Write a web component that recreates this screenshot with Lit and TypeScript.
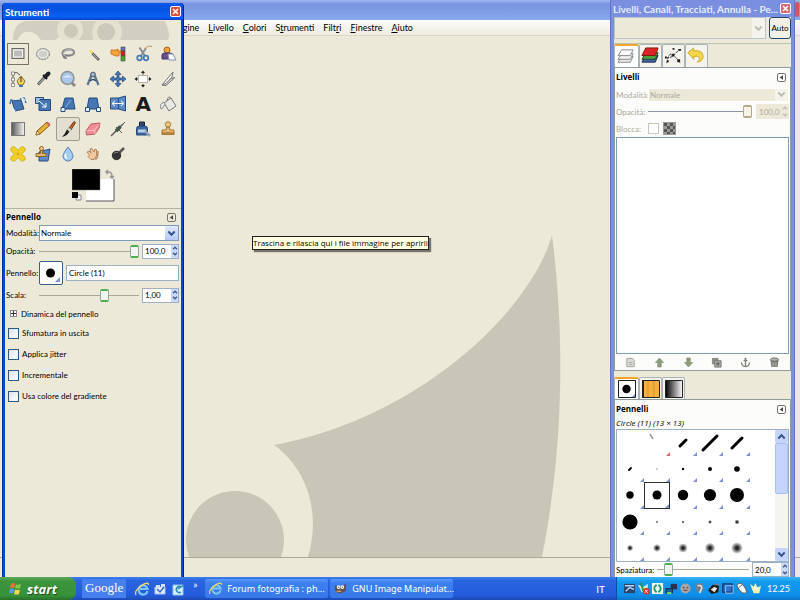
import { LitElement, html, css, svg, nothing } from "lit";
import { customElement, property } from "lit/decorators.js";
import { classMap } from "lit/directives/class-map.js";
import { styleMap } from "lit/directives/style-map.js";

const controls = css`
  :host {
    font-family: Lato, "Open Sans", sans-serif;
    font-size: 8px;
    line-height: 12px;
    color: #000;
  }
  * {
    box-sizing: border-box;
  }
  button,
  input,
  select {
    font: inherit;
    color: inherit;
    margin: 0;
    padding: 0;
    border: 0;
    background: none;
    min-width: 0;
    border-radius: 0;
  }
  svg {
    display: block;
  }
  h2 {
    margin: 0;
    font: 700 8px/12px "Open Sans", sans-serif;
  }
  .combo {
    position: relative;
    display: flex;
    flex: 1;
    min-width: 0;
    height: 16px;
    background: #fff;
    border: 1px solid #7f9db9;
  }
  .combo select {
    appearance: none;
    flex: 1;
    padding: 0 1px;
  }
  .combo .arrow {
    position: absolute;
    right: 0;
    top: 0;
    bottom: 0;
    width: 13px;
    display: grid;
    place-items: center;
    background: linear-gradient(#e1eafe, #b4caf6);
    pointer-events: none;
  }
  .combo.off {
    background: #ece9d8;
    border-color: #fff;
    color: #aca899;
  }
  .combo.off select {
    opacity: 1;
    color: #aca899;
  }
  .combo.off .arrow {
    background: #f5f4ec;
  }
  input[type="range"] {
    appearance: none;
    width: 0;
    height: 14px;
    background: linear-gradient(#aca899, #aca899) center / 100% 1px no-repeat;
  }
  input[type="range"]::-webkit-slider-thumb {
    appearance: none;
    width: 9px;
    height: 13px;
    background: #f4f4ef;
    border: 1px solid #8fa8a0;
    border-top: 2px solid #4cb050;
    border-bottom: 2px solid #4cb050;
    border-radius: 2px;
  }
  input[type="range"]:disabled {
    background-image: linear-gradient(#8e94a8, #8e94a8);
  }
  input[type="range"]:disabled::-webkit-slider-thumb {
    border-color: #b5a888;
    background: #f6f3e6;
  }
  input[type="checkbox"] {
    appearance: none;
    width: 11px;
    height: 11px;
    background: linear-gradient(135deg, #dfe3e6, #fff);
    border: 1px solid #2c5a82;
  }
  input[type="checkbox"]:disabled {
    background: #fff;
    border-color: #cac8bb;
  }
  .spin {
    display: flex;
    flex-shrink: 0;
    height: 15px;
    background: #fff;
    border: 1px solid #9db1c4;
  }
  .spin input {
    flex: 1;
    width: 0;
    padding-left: 2px;
  }
  .spin.off,
  .spin.off input {
    background: #ece9d8;
    color: #aca899;
    border-color: #ece9d8;
  }
  .steps {
    display: flex;
    flex-direction: column;
    width: 7px;
  }
  .steps button {
    flex: 1;
    display: grid;
    place-items: center;
    background: #cbdafa;
  }
  .spin.off .steps button {
    background: none;
  }
  .collapse {
    display: grid;
    place-items: center;
    width: 9px;
    height: 9px;
    border: 1px solid #77756a;
    border-radius: 2px;
  }
  .close {
    display: grid;
    place-items: center;
    width: 11px;
    height: 11px;
    border: 1px solid #fff;
    border-radius: 2px;
    background: #dc5030;
  }
  .title {
    display: flex;
    align-items: center;
    justify-content: space-between;
    color: #fff;
    font-size: 10px;
    font-weight: 700;
    white-space: nowrap;
  }
`;

const chevron = (down: boolean, color = "#3a5590", size = 7) =>
  svg`<svg width=${size} height=${size - 2} viewBox="0 0 7 5"><path d=${down ? "M1 1l2.5 2.5L6 1" : "M1 4l2.5-2.500L6 4"} fill="none" stroke=${color} stroke-width="1.600"/></svg>`;
const cross = svg`<svg width="7" height="7" viewBox="0 0 7 7"><path d="M1 1l5 5M6 1L1 6" stroke="#fff" stroke-width="1.500"/></svg>`;
const leftMark = svg`<svg width="5" height="5" viewBox="0 0 5 5"><path d="M4 .3v4.400L.8 2.500z" fill="#444"/></svg>`;

const combo = (label: string, value: string, off = false) => html`<div class=${classMap({ combo: true, off })}>
  <select aria-label=${label} ?disabled=${off}><option>${value}</option></select>
  <span class="arrow">${chevron(true, off ? "#c0bdb0" : "#3a5590", 9)}</span>
</div>`;
const spin = (label: string, value: string, off = false) => html`<div class=${classMap({ spin: true, off })}>
  <input type="text" aria-label=${label} .value=${value} ?disabled=${off} />
  <span class="steps">
    <button aria-label="Aumenta" ?disabled=${off}>${chevron(false, off ? "#c0bdb0" : "#3a5590", 6)}</button>
    <button aria-label="Diminuisci" ?disabled=${off}>${chevron(true, off ? "#c0bdb0" : "#3a5590", 6)}</button>
  </span>
</div>`;

const B = "#4577b5";
const D = "#274b7a";
const tools: [string, unknown][] = [
  ["Selezione rettangolare", svg`<rect x="4" y="4.500" width="12" height="10" fill="#c5c5bf" stroke="#666"/><rect x="5.500" y="6" width="9" height="7" fill="#bcbcb8" stroke="#f6f6f3"/>`],
  ["Selezione ellittica", svg`<ellipse cx="10" cy="10" rx="6.500" ry="5.500" fill="#cfcfc9" stroke="#777" stroke-dasharray="2 1"/><ellipse cx="10" cy="10" rx="4.800" ry="3.800" fill="none" stroke="#f4f4f0"/>`],
  ["Selezione a mano libera", svg`<path d="M7 12C3 11 4 6 10 5.500s8 4 3.500 5.500S7 10.500 6 12s2 1.500 2 3" fill="none" stroke="#808080" stroke-width="2.300"/><path d="M7 11.500C3.500 10.500 5 6.500 10 5.800s7 3.200 3.500 4.700" fill="none" stroke="#ccc"/>`],
  ["Selezione fuzzy", svg`<path d="M9 9l7 7" stroke="#666" stroke-width="2.600"/><path d="M9 9l6 6" stroke="#aaa"/><path d="M8 5l1 2 2 .5-2 1-.5 2.500-1-2.500-2.300-.5 2-1z" fill="#f5df5a"/>`],
  ["Selezione per colore", svg`<path d="M13 3h4v4h-4z" fill="#6278c0" stroke="#444" stroke-width=".6"/><path d="M13 7h4v5h-4z" fill="#c92424" stroke="#444" stroke-width=".6"/><path d="M13 12h4v5h-4z" fill="#49a830" stroke="#444" stroke-width=".6"/><path d="M3 6h5l2-1v2h3v2h-2v3H8L3 10z" fill="#f5a33a" stroke="#c36a10" stroke-width=".8"/>`],
  ["Forbici intelligenti", svg`<path d="M6.500 3.500L12 12M13 4L8 12" stroke="#8a8f93" stroke-width="2"/><circle cx="6.500" cy="14" r="2.300" fill="none" stroke=${B} stroke-width="1.700"/><circle cx="13" cy="14" r="2.300" fill="none" stroke=${B} stroke-width="1.700"/><path d="M12 5q2-4 7-2.500" fill="none" stroke="#c99060"/>`],
  ["Selezione primo piano", svg`<circle cx="9" cy="6" r="3" fill="#eea33d" stroke="#a36218"/><path d="M4 15V11q0-2 3-2h5q3 0 3 3v3z" fill="#6c4c8c" stroke="#423070"/><path d="M10 10h5l3 6h-7z" fill="#fafafa" stroke="#8494b0"/>`],
  ["Tracciati", svg`<path d="M5 4v12M5 4q4-2 7 2" fill="none" stroke="#555"/><path d="M3.500 3h3v3h-3zM3.500 9h3v3h-3zM3.500 14.500h3v3h-3z" fill="#fff" stroke="#666" stroke-width=".7"/><path d="M13 7l4 5-2 4h-4l-2-4z" fill="#f0d25c" stroke="#8b7326"/><path d="M13 8v5" stroke="#333"/><path d="M11 16h4v2h-4z" fill=${B}/>`],
  ["Prelievo colore", svg`<path d="M5 15.500L12 8" stroke="#555" stroke-width="2.600"/><path d="M5.500 15l6-6" stroke="#cfe0ea"/><path d="M10 6l4 4" stroke="#111" stroke-width="2"/><path d="M12.500 7.500L15.500 4.500" stroke="#1c2028" stroke-width="4" stroke-linecap="round"/>`],
  ["Zoom", svg`<path d="M12.500 12.500l4.500 4.500" stroke="#888" stroke-width="3"/><circle cx="9.500" cy="9" r="6.500" fill="#a9c7e8" stroke="#8c9196" stroke-width="1.400"/><path d="M5 8.500q4.500-5 9 0z" fill="#d5e5f4"/>`],
  ["Misurino", svg`<path d="M9 5L4.500 16M11 5l4.500 11" stroke="#60768e" stroke-width="2.300"/><path d="M7 12q3-3 6 0" fill="none" stroke=${D} stroke-width="1.500"/><circle cx="10" cy="5.500" r="2.400" fill="#9fb2c6" stroke="#4a5a6a"/>`],
  ["Sposta", svg`<path d="M10 2l3 3.500h-2V9h3.500V7L18 10l-3.500 3v-2H11v3.500h2L10 18l-3-3.500h2V11H5.500v2L2 10l3.500-3v2H9V5.500H7z" fill=${B} stroke=${D} stroke-width=".7"/>`],
  ["Allineamento", svg`<rect x="5.500" y="6.500" width="9" height="7" fill="#fff" stroke="#b3b3aa"/><path d="M10 1.500l2 2.500H8zM10 18.500L12 16H8zM1.500 10L4 8v4zM18.500 10L16 8v4z" fill="#222"/><path d="M10 3v2.500M10 15v2.500M3 10h2M15.500 10h2" stroke="#222"/>`],
  ["Ritaglia", svg`<path d="M4 16L15 3l-1 5-6 7z" fill="#f7f7f7" stroke="#777"/><path d="M4 16l4 .5 9-8-4 1-5 5z" fill="#ddd" stroke="#777"/>`],
  ["Ruota", svg`<path d="M4 7l9-1 3 9-9 2z" fill=${B} stroke=${D}/><path d="M2 10l1-4 4 1M18 9l-2-5-4 1" fill="none" stroke=${B} stroke-width="1.600"/><path d="M3 14l4 3M13 3l4 4" stroke="#e8f0fa" stroke-width="1.700"/>`],
  ["Scala", svg`<path d="M2.500 3.500h8v6h-8z" fill="#9dbbe0" stroke=${D}/><path d="M7 5.500h10.500v11H6v-7z" fill=${B} stroke=${D}/><path d="M6 7l7 6m0-4v4h-4" stroke="#fff" fill="none"/>`],
  ["Inclina", svg`<path d="M7 4h8l2 11H4z" fill=${B} stroke=${D}/><path d="M6 15L13 6" stroke="#93b3dc"/><path d="M3 13.500h4v4H3z" fill="#e8f0fa" stroke=${D}/>`],
  ["Prospettiva", svg`<path d="M6 4h8l2 11H4z" fill=${B} stroke=${D}/><path d="M2.500 13.500h4v4h-4zM13.500 13.500h4v4h-4z" fill="#e8f0fa" stroke=${D}/>`],
  ["Rifletti", svg`<path d="M2.500 4h8v11h-8zM10.500 4l7-2v15l-7-2z" fill="#5b8aca" stroke=${D}/><path d="M5 9.500h10M7 7l-3 2.500L7 12M13 7l3 2.500-3 2.500" stroke="#fff" fill="none"/>`],
  ["Testo", "A"],
  ["Riempimento colore", svg`<path d="M6 9l7-5 5 8-7 5z" fill="#e8e8e4" stroke="#777"/><path d="M13 4q-3-3-4 3" fill="none" stroke="#777"/><path d="M6 8q-5 2-3 7 2 0 4-5z" fill="#eee" stroke="#888"/>`],
  ["Sfumatura", svg`<defs><linearGradient id="g"><stop stop-color="#555"/><stop offset="1" stop-color="#f6f6f6"/></linearGradient></defs><rect x="3.500" y="3.500" width="13" height="13" fill="url(#g)" stroke="#777"/>`],
  ["Matita", svg`<path d="M3 16l1-4L14 3l3 3-10 9z" fill="#e5b235" stroke="#8a5a14"/><path d="M3 16l1-4 3 3z" fill="#f3dbb0" stroke="#8a5a14" stroke-width=".6"/><path d="M13 4l3 3 1.500-2-2.500-2z" fill="#d4625a"/>`],
  ["Pennello", svg`<path d="M11 9l5-6.500 1.500 1L13 11z" fill="#b5652c" stroke="#7d3c12"/><path d="M9 10.500l2-2 2.300 2.300-2 2z" fill="#ddd" stroke="#777" stroke-width=".5"/><path d="M9 10.500l2.300 2.300Q9 17 4 18q3-3 5-7.500z" fill="#1d1d1d"/>`],
  ["Gomma", svg`<path d="M3 12l5-7 9-1L16 9l-4 6-8.500 1z" fill="#ef8f94" stroke="#c0575e"/><path d="M3.500 12l8-1 5-6M11.500 11l.5 4" stroke="#fac4c4" fill="none"/>`],
  ["Aerografo", svg`<path d="M3 17L15 5" stroke="#555" stroke-width="1.500"/><path d="M8 12l4.500-4.500" stroke="#3c5548" stroke-width="3.500"/><path d="M14 6l3-3M8 8l6 6" stroke="#555"/>`],
  ["Stilo", svg`<path d="M6.500 3h5v4h-5z" fill="#30486a" stroke="#223"/><path d="M3.500 9.500q0-2.500 3-2.500h5q3 0 3 2.500V16h-11z" fill="#3d66a0" stroke=${D}/><path d="M5 10.500h8v3H5z" fill="#bdd0e6"/><path d="M12 12l5 5" stroke="#8fa2b8" stroke-width="2.500"/>`],
  ["Clona", svg`<circle cx="10" cy="5.500" r="2.700" fill="#efc98a" stroke="#a3752e"/><path d="M8.700 8h2.600l.7 3h4v4.500H4V11h4z" fill="#e5b871" stroke="#a3752e"/><path d="M4 14h12" stroke="#8a5b1c"/>`],
  ["Cerotto", svg`<path d="M5.500 5.500l9 9M14.500 5.500l-9 9" stroke="#d0a80a" stroke-width="6" stroke-linecap="round"/><path d="M5.500 5.500l9 9M14.500 5.500l-9 9" stroke="#f1cf28" stroke-width="4.600" stroke-linecap="round"/><path d="M8.500 10h3M10 8.500v3" stroke="#d5a80c"/>`],
  ["Clona in prospettiva", svg`<path d="M6 8l11-3-2 12-9 0z" fill="#5d8cc8" stroke=${D}/><circle cx="8.500" cy="4.500" r="2" fill="#efc98a" stroke="#8b6224"/><path d="M7.500 6.500h2v3H13v3H3v-3h4.500z" fill="#e0b670" stroke="#8b6224"/>`],
  ["Sfoca", svg`<path d="M10 3q5 6.500 5 9a5 5 0 0 1-10 0q0-2.500 5-9z" fill="#a5cdf0" stroke="#4d83bb"/><path d="M8 10q-2 3 1 4" stroke="#fff" stroke-width="1.500" fill="none"/>`],
  ["Sfumino", svg`<path d="M4 8l2-1 2 2-1-4 2-.5 2 3.500 1-3 1.500.5V12l-2.500 3.500H8l-3-3 1.500-1.500z" fill="#efc7a0" stroke="#a5734a" stroke-width=".8"/><path d="M12 15q3 1 3-8" stroke="#b98a60" stroke-width="1.500" fill="none"/>`],
  ["Scherma", svg`<path d="M11 9l5-5" stroke="#555" stroke-width="2.500"/><circle cx="8.500" cy="11.500" r="4.700" fill="#333"/><path d="M6 9.500q1.500-2 4-1" stroke="#888" fill="none"/>`],
];

@customElement("tool-window")
export class ToolWindow extends LitElement {
  static styles = [
    controls,
    css`
      :host {
        display: flex;
        flex-direction: column;
        background: #0a45dd;
        padding: 0 4px 0 4px;
        border-radius: 4px 4px 0 0;
        border-left: 1px solid #0831a8;
        border-right: 1px solid #001a90;
      }
      .title {
        height: 17px;
        margin: 0 -4px;
        padding: 0 2px;
        border-radius: 4px 4px 0 0;
        background: linear-gradient(#0d5ae8, #0450e0 30%, #0862f5 80%, #0440c8);
      }
      .body {
        flex: 1;
        margin: 0 -2px;
        background: #ece9d8;
      }
      .banner {
        height: 21px;
        display: flex;
        justify-content: center;
        overflow: hidden;
      }
      .tools {
        display: grid;
        grid-template-columns: repeat(7, 1fr);
      }
      .tools button {
        display: grid;
        place-items: center;
        height: 25px;
      }
      .tools svg {
        overflow: visible;
      }
      .face {
        display: grid;
        place-items: center;
        width: 20px;
        height: 20px;
      }
      .face.select {
        outline: 1px solid #777469;
      }
      .face.active {
        width: 24px;
        height: 24px;
        border: 1px solid #a09d90;
        border-radius: 2px;
        background: #e2dfd0;
      }
      .letter {
        font: 900 20px/20px "DejaVu Sans", sans-serif;
        color: #1c1c1c;
      }
      .colors {
        display: flex;
        justify-content: center;
        height: 43px;
        padding-top: 3px;
        border-bottom: 1px solid #b5b2a3;
      }
      .options {
        display: flex;
        flex-direction: column;
        padding: 1px 2px 0 1px;
      }
      .head {
        display: flex;
        align-items: center;
        justify-content: space-between;
        height: 14px;
        padding-right: 3px;
      }
      .row {
        display: grid;
        grid-template-columns: 33px minmax(0, 1fr);
        align-items: center;
        height: 18px;
      }
      .row.tall {
        height: 26px;
      }
      .row > div {
        display: flex;
        align-items: center;
        gap: 3px;
      }
      .row input[type="range"] {
        flex: 1;
      }
      .row .spin {
        width: 37px;
      }
      .brush {
        flex-shrink: 0;
        width: 24px;
        height: 24px;
        border: 1px solid #3b5f80;
        border-radius: 2px;
        background: #fff;
      }
      .entry {
        flex: 1;
        height: 16px;
        padding: 0 2px;
        background: #fff;
        border: 1px solid #9db1c4;
      }
      .expander {
        display: flex;
        align-items: center;
        gap: 4px;
        height: 19px;
        padding-left: 4px;
      }
      .plus {
        display: grid;
        place-items: center;
        width: 7px;
        height: 7px;
        border: 1px solid #888;
        background: #fff;
      }
      .checks {
        display: flex;
        flex-direction: column;
        gap: 9px;
        padding: 4px 2px;
      }
      .checks label {
        display: flex;
        align-items: center;
        gap: 3px;
      }
    `,
  ];

  render() {
    return html`
      <header class="title"><span>Strumenti</span><button class="close" aria-label="Chiudi">${cross}</button></header>
      <div class="body">
        <div class="banner">
          <svg width="176" height="22" viewBox="0 0 176 22">
            <path d="M8 20Q8 1 24 1H160Q166 14 163 20H115A14 14 0 0 0 88 20H74Q60 12 50 20H36Q30 10 20 12 14 15 13 20z" fill="#d2cfc0" />
            <circle cx="65" cy="10" r="13" fill="#e4e1d1" /><circle cx="66" cy="11" r="7" fill="#ccc9ba" />
            <circle cx="102" cy="12" r="15" fill="#e4e1d1" /><circle cx="101" cy="12" r="9" fill="#ccc9ba" />
            <path d="M0 20h176v3H0z" fill="#ece9d8" />
          </svg>
        </div>
        <div class="tools">
          ${tools.map(
            ([name, art], i) => html`<button aria-label=${name}>
              <span class=${classMap({ face: true, select: i === 0, active: i === 23, letter: art === "A" })}>
                ${art === "A" ? art : html`<svg width="20" height="20" viewBox="0 0 20 20" fill="none">${art}</svg>`}
              </span>
            </button>`
          )}
        </div>
        <div class="colors">
          <svg width="43" height="36" viewBox="0 0 43 36">
            <path d="M14 10h28v22H14z" fill="#fff" /><path d="M14 32h28V10" fill="none" stroke="#555" />
            <path d="M0 0h28v21H0z" fill="#000" stroke="#777" stroke-width=".5" />
            <path d="M4 26h5v5H4z" fill="#fff" stroke="#888" /><path d="M0 23h6v6H0z" fill="#000" />
            <path d="M36 1l-2 2 2 2M34 3h3q3 0 3 5M38 7l2 2 2-2" fill="none" stroke="#999" stroke-width="1.500" />
          </svg>
        </div>
        <div class="options">
          <div class="head"><h2>Pennello</h2><button class="collapse" aria-label="Menu">${leftMark}</button></div>
          <div class="row"><span>Modalità:</span><div>${combo("Modalità", "Normale")}</div></div>
          <div class="row"><label for="op">Opacità:</label><div><input id="op" type="range" value="100" />${spin("Opacità", "100,0")}</div></div>
          <div class="row tall">
            <label for="br">Pennello:</label>
            <div>
              <button class="brush" aria-label="Scegli pennello">
                <svg width="22" height="22" viewBox="0 0 22 22"><circle cx="10.500" cy="11" r="4.500" /><path d="M20 15v5h-5z" fill="#7a8fdc" /></svg>
              </button>
              <input id="br" class="entry" type="text" value="Circle (11)" />
            </div>
          </div>
          <div class="row"><label for="sc">Scala:</label><div><input id="sc" type="range" value="67" />${spin("Scala", "1,00")}</div></div>
          <button class="expander"><span class="plus"><svg width="5" height="5" viewBox="0 0 5 5"><path d="M0 2.500h5M2.500 0v5" stroke="#333" /></svg></span>Dinamica del pennello</button>
          <div class="checks">
            ${["Sfumatura in uscita", "Applica jitter", "Incrementale", "Usa colore del gradiente"].map(
              (t) => html`<label><input type="checkbox" />${t}</label>`
            )}
          </div>
        </div>
      </div>
    `;
  }
}

const dockTabs = [
  ["Livelli", svg`<path d="M5 3h12l-3 6H1z" transform="translate(0 7)" fill="#eee" stroke="#888"/><path d="M5 3h12l-3 6H1z" transform="translate(0 4)" fill="#eee" stroke="#888"/><path d="M5 3h12l-3 6H1z" fill="#fafafa" stroke="#888"/>`],
  ["Canali", svg`<path d="M5 3h13l-3 7H1z" transform="translate(0 7)" fill="#3d62b0" stroke="#234"/><path d="M5 3h13l-3 7H1z" transform="translate(0 4)" fill="#49a23c" stroke="#243"/><path d="M5 2h13l-3 8H1z" fill="#dc2525" stroke="#811"/>`],
  ["Tracciati", svg`<path d="M3 18Q5 6 9 9t8 9M2 12q6 1 9-3t6-5" fill="none" stroke="#334" stroke-dasharray="3 1"/><path d="M8 8h3v3H8zM3 15h2v2H3zM14 14h3v3h-3zM15 3h3v2h-3zM1 11h2v2H1zM9 2h2v2H9z" fill="#222"/>`],
  ["Annulla", svg`<path d="M1 7l6-5v3q10-1 10 6 0 5-6 6 3-3 2-5t-6-1v3z" fill="#f3d648" stroke="#c8a530"/>`],
] as const;

const footTools = [
  ["Nuovo livello", svg`<path d="M2 1.500h6l2 2v7H2z" fill="#dcdcd4" stroke="#9c9c92"/><path d="M4 6h4M4 8h4" stroke="#aaa"/>`],
  ["Alza", svg`<path d="M6 1l4.500 5H8v5H4V6H1.500z" fill="#8b9c7c" stroke="#78886c" stroke-width=".6"/>`],
  ["Abbassa", svg`<path d="M6 11L1.500 6H4V1h4v5h2.500z" fill="#8b9c7c" stroke="#78886c" stroke-width=".6"/>`],
  ["Duplica", svg`<path d="M1 1h7v7H1z" fill="#8e8e88"/><path d="M4 4h7v7H4z" fill="#a8a8a0" stroke="#777"/><path d="M6 6h3v3H6z" fill="#666"/>`],
  ["Ancora", svg`<path d="M6 2v8M1.500 6q.5 4 4.500 4.500Q10 10 10.500 6M4 4h4" fill="none" stroke="#808078" stroke-width="1.500"/><circle cx="6" cy="2" r="1.200" fill="#808078"/>`],
  ["Elimina", svg`<path d="M1.500 3h9l-1 8h-7z" fill="#85857e"/><ellipse cx="6" cy="2.800" rx="4.500" ry="1.800" fill="#b2b2aa" stroke="#66665f"/><path d="M4.500 6v4M7.500 6v4" stroke="#b8b8b0"/>`],
] as const;

type Brush = { r?: number; line?: number; faint?: boolean; soft?: boolean };
const brushes: Brush[] = [
  {}, { line: 2, faint: true }, { line: 3 }, { line: 7 }, { line: 5 },
  { line: 1 }, { r: 0.5 }, { r: 1.2 }, { r: 2 }, { r: 2.8 },
  { r: 3.7 }, { r: 4.5 }, { r: 5.2 }, { r: 6.1 }, { r: 7 },
  { r: 7.6 }, { r: 0.8 }, { r: 1.5, soft: true }, { r: 2, soft: true }, { r: 2.6, soft: true },
  { r: 3.3, soft: true }, { r: 4, soft: true }, { r: 4.8, soft: true }, { r: 5.4, soft: true }, { r: 6, soft: true },
];

@customElement("dock-window")
export class DockWindow extends LitElement {
  static styles = [
    controls,
    css`
      :host {
        display: flex;
        flex-direction: column;
        background: #7a8fe0;
        border-left: 1px solid #6374c4;
        border-right: 1px solid #6374c4;
        padding: 0 3px;
      }
      .title {
        height: 17px;
        margin: 0 0 0 -1px;
        color: #e6ecfc;
      }
      .title .close {
        background: #cc6a78;
        flex-shrink: 0;
      }
      .body {
        display: flex;
        flex: 1;
        flex-direction: column;
        min-height: 0;
        background: #ece9d8;
      }
      .picker {
        display: flex;
        gap: 3px;
        height: 27px;
        padding-bottom: 5px;
        border-bottom: 1px solid #b9c4b4;
      }
      .picker .combo {
        height: 22px;
        border-color: #b9c4cc;
      }
      .picker .auto {
        width: 22px;
        height: 22px;
        border: 1px solid #24486a;
        border-radius: 3px;
        background: #f2f0e4;
      }
      .tabs {
        display: flex;
        height: 23px;
      }
      .tabs button {
        display: grid;
        place-items: center;
        width: 23px;
        border: 1px solid #aab4b8;
        border-bottom: 0;
        border-radius: 2px 2px 0 0;
        background: #f5f4ec;
      }
      .tabs button:first-child {
        width: 25px;
        background: #fff;
        border-top: 2px solid #f2a62c;
      }
      .pane {
        display: flex;
        flex-direction: column;
        border: 1px solid #919b9c;
        background: #fcfcfa;
        padding: 0 1px;
      }
      .layers {
        flex: 1;
        min-height: 0;
        color: #aca899;
      }
      .head {
        display: flex;
        align-items: center;
        justify-content: space-between;
        height: 18px;
        padding-right: 3px;
        color: #000;
      }
      .row {
        display: grid;
        grid-template-columns: 32px minmax(0, 1fr);
        align-items: center;
        height: 17px;
      }
      .row > div {
        display: flex;
        align-items: center;
        gap: 4px;
      }
      .row input[type="range"] {
        flex: 1;
      }
      .row .spin {
        width: 33px;
      }
      .row .combo {
        height: 14px;
      }
      .list {
        flex: 1;
        border: 1px solid #7f9db9;
        background: #fff;
      }
      .foot {
        display: flex;
        justify-content: space-around;
        align-items: center;
        height: 16px;
      }
      .low {
        height: 22px;
        margin-top: 6px;
      }
      .brushes {
        height: 178px;
        border-bottom: 0;
      }
      .name {
        font: italic 8px/10px "Open Sans", sans-serif;
        height: 11px;
      }
      .scroller {
        display: flex;
        height: 133px;
        border: 1px solid #9db1c4;
        background: #fff;
      }
      .grid {
        flex: 1;
        display: grid;
        grid-template-columns: repeat(5, 1fr);
        grid-template-rows: repeat(5, 1fr);
        padding-right: 25px;
      }
      .grid button {
        position: relative;
        display: grid;
        place-items: center;
        min-height: 0;
      }
      .grid button.on {
        border: 1px solid #333;
      }
      .corner {
        position: absolute;
        right: 0;
        bottom: 0;
      }
      .bar {
        display: flex;
        flex-direction: column;
        width: 13px;
        background: #f5f5f0;
      }
      .bar span {
        display: grid;
        place-items: center;
        height: 13px;
        border-radius: 2px;
        background: #c4d4fa;
      }
      .bar .thumb {
        height: 51px;
        border: 1px solid #a8bdf0;
      }
      .bar .space {
        flex: 1;
        background: none;
      }
      .spacing {
        display: flex;
        align-items: center;
        gap: 3px;
        height: 15px;
      }
      .spacing input[type="range"] {
        flex: 1;
      }
      .spacing .spin {
        width: 37px;
      }
    `,
  ];

  private dab(b: Brush, i: number) {
    const l = b.line;
    const art = b.faint
      ? svg`<path d="M6 4l3 5" stroke="#999" stroke-width="1.500"/>`
      : l
        ? svg`<path d=${`M${13 - l} ${13 + l}L${13 + l} ${13 - l}`} stroke="#000" stroke-width=${l > 2 ? 3 : 2} stroke-linecap="round"/>`
        : b.r
          ? svg`<circle cx="13" cy="13" r=${b.r} fill=${b.soft ? "url(#soft)" : "#000"}/>`
          : nothing;
    return html`<button class=${classMap({ on: i === 11 })} aria-label=${`Pennello ${i + 1}`}>
      <svg width="24" height="24" viewBox="1 1 24 24">
        <defs><radialGradient id="soft"><stop offset=".2" stop-color="#222" /><stop offset="1" stop-color="#222" stop-opacity="0" /></radialGradient></defs>
        ${art}
      </svg>
      ${i ? html`<svg class="corner" width="4" height="4" viewBox="0 0 4 4"><path d="M4 0v4H0z" fill=${i === 1 ? "#e0627c" : "#8090d4"} /></svg>` : nothing}
    </button>`;
  }

  render() {
    return html`
      <header class="title"><span>Livelli, Canali, Tracciati, Annulla - Pe...</span><button class="close" aria-label="Chiudi">${cross}</button></header>
      <div class="body">
        <div class="picker">${combo("Immagine", "", true)}<button class="auto">Auto</button></div>
        <nav class="tabs">
          ${dockTabs.map(([n, a]) => html`<button aria-label=${n}><svg width="19" height="20" viewBox="0 0 20 21" fill="none">${a}</svg></button>`)}
        </nav>
        <section class="pane layers">
          <div class="head"><h2>Livelli</h2><button class="collapse" aria-label="Menu livelli">${leftMark}</button></div>
          <div class="row"><span>Modalità:</span><div>${combo("Modalità", "Normale", true)}</div></div>
          <div class="row"><label for="lo">Opacità:</label><div><input id="lo" type="range" value="100" disabled />${spin("Opacità livello", "100,0", true)}</div></div>
          <div class="row">
            <label for="lk">Blocca:</label>
            <div>
              <input id="lk" type="checkbox" disabled />
              <svg width="13" height="13" viewBox="0 0 13 13"><path d="M0 0h13v13H0z" fill="#999" /><path d="M1 1h3v3H1zM7 1h3v3H7zM4 4h3v3H4zM10 4h2v3h-2zM1 7h3v3H1zM7 7h3v3H7zM4 10h3v2H4zM10 10h2v2h-2z" fill="#555" /></svg>
            </div>
          </div>
          <div class="list"></div>
          <div class="foot">
            ${footTools.map(([n, a]) => html`<button aria-label=${n}><svg width="11" height="11" viewBox="0 0 12 12" fill="none">${a}</svg></button>`)}
          </div>
        </section>
        <nav class="tabs low">
          <button aria-label="Pennelli"><svg width="18" height="18" viewBox="0 0 18 18"><path d="M.5.500h17v17H.5z" fill="#fff" stroke="#222" /><circle cx="8.500" cy="9" r="4.200" /><path d="M17 14v3h-3z" fill="#7a8fdc" /></svg></button>
          <button aria-label="Motivi"><svg width="18" height="18" viewBox="0 0 18 18"><path d="M.5.500h17v17H.5z" fill="#f5b042" stroke="#222" /><path d="M6 1v16M12 1v16" stroke="#db8f22" /><path d="M1 0v18" stroke="#222" stroke-width="2" /></svg></button>
          <button aria-label="Gradienti"><svg width="18" height="18" viewBox="0 0 18 18"><defs><linearGradient id="k"><stop /><stop offset="1" stop-color="#fff" /></linearGradient></defs><path d="M.5.500h17v17H.5z" fill="url(#k)" stroke="#222" /></svg></button>
        </nav>
        <section class="pane brushes">
          <div class="head"><h2>Pennelli</h2><button class="collapse" aria-label="Menu pennelli">${leftMark}</button></div>
          <div class="name">Circle (11) (13 × 13)</div>
          <div class="scroller">
            <div class="grid">${brushes.map((b, i) => this.dab(b, i))}</div>
            <div class="bar">
              <span>${chevron(false, "#3a5590", 9)}</span><span class="thumb"></span><span class="space"></span><span>${chevron(true, "#3a5590", 9)}</span>
            </div>
          </div>
          <div class="spacing"><label for="sp">Spaziatura:</label><input id="sp" type="range" value="8" />${spin("Spaziatura", "20,0")}</div>
        </section>
      </div>
    `;
  }
}

const ie = svg`<path d="M12.500 9A4.500 4.500 0 1 1 12.500 7H5" fill="none" stroke="#7cc4fa" stroke-width="2.200"/><path d="M1 13Q-1 9 6 4t8-1" fill="none" stroke="#eed86a" stroke-width="1.300"/>`;
const quick = [
  ["Internet Explorer", ie],
  ["Mostra desktop", svg`<path d="M2 5h10v7H2z" fill="#e5eefc" stroke="#a9c2ee"/><path d="M3 3h4v3H3zM8 2h4v4H8z" fill="#d3e2fa"/><path d="M4 7l3 3 4-5" stroke="#3568c0" stroke-width="1.500" fill="none"/>`],
  ["Outlook Express", svg`<path d="M2 3h10v10H2z" fill="#d8f0fb" stroke="#90c8e8"/><path d="M10 5a3 3 0 1 0 0 5M7 7l6-4" stroke="#2388b8" stroke-width="1.500" fill="none"/>`],
] as const;

const tray = [
  svg`<path d="M1 2h12v10H1z" fill="#27476f"/><path d="M2 4h10M3 10l4-4 5 2" stroke="#b9d8f5" stroke-width="1.500"/>`,
  svg`<path d="M1 3l6 2 5-3-1 8-6 1z" fill="#c8edd0"/><path d="M4 1l3 9" stroke="#2b9440" stroke-width="2"/><circle cx="10" cy="10" r="3.500" fill="#d93a22"/><path d="M8.500 8.500l3 3m0-3l-3 3" stroke="#fff"/>`,
  svg`<path d="M1 1h12v12H1z" fill="#e9f8f0"/><path d="M6 3Q1 7 6 11M8 3q5 4 0 8" stroke="#239a5b" stroke-width="2"/>`,
  svg`<path d="M6 2h7v6H6z" fill="#23344e"/><path d="M1 7h7v5H1z" fill="#1a5f8d" stroke="#102a40"/><path d="M2 12h5" stroke="#7be06c" stroke-width="2"/>`,
  svg`<circle cx="7" cy="7" r="5.500" fill="#a9a4a4"/><path d="M4 6h2M8 6h2M5 9h4" stroke="#6a4c4c" stroke-width="1.500"/>`,
  svg`<circle cx="7" cy="6" r="5" fill="#6c7e91"/><path d="M5 4q6-1 4 4l-2 4" stroke="#e2e4e0" stroke-width="1.700"/>`,
  svg`<path d="M1 9l5-6 7 1-1 7-7 2z" fill="#1d1d1d"/><path d="M4 8l4-3 3 2-3 4z" fill="#e8e5dc"/><path d="M8 2l4 1" stroke="#d53"/>`,
  svg`<path d="M2 2h10v9H2z" fill="#2d73c8" stroke="#123a78" stroke-width="1.500"/><path d="M5 4h8v8H5z" fill="none" stroke="#9cc4f2"/>`,
  svg`<path d="M2 3q4-4 8 2t1 7-6-3-3-6z" fill="#fff" stroke="#555"/><path d="M4 6l4-3" stroke="#777"/>`,
  svg`<path d="M1 2l4 3 2-4 2 5 4-2-2 8H5z" fill="#f6f2a8"/><path d="M5 6l5 1" stroke="#fff" stroke-width="2"/>`,
];

@customElement("task-bar")
export class TaskBar extends LitElement {
  @property() clock = "12.25";

  static styles = [
    controls,
    css`
      :host {
        display: flex;
        align-items: stretch;
        height: 23px;
        color: #fff;
        font-size: 10px;
        background: linear-gradient(#3a80ee, #2a65df 15%, #245bdb 80%, #1c49b4);
      }
      .start {
        display: flex;
        align-items: center;
        gap: 4px;
        width: 76px;
        padding-left: 9px;
        border-radius: 0 8px 8px 0;
        background: linear-gradient(#5ba95b, #3c943c 20%, #37923a 80%, #2a702c);
        font: italic 700 13px/18px "Open Sans", sans-serif;
        text-shadow: 1px 1px 1px #1a4a1a;
      }
      .google {
        margin: 2px 9px 2px 6px;
        padding: 0 3px;
        background: #4580ee;
        font: 13px/18px "Liberation Serif", serif;
        color: #fff;
        text-decoration: none;
      }
      .quick {
        display: flex;
        align-items: center;
        gap: 4px;
      }
      .more {
        width: 20px;
        text-align: center;
        line-height: 14px;
      }
      .task {
        display: flex;
        align-items: center;
        gap: 5px;
        width: 123px;
        margin: 2px 2px 2px 0;
        padding-left: 4px;
        border-radius: 2px;
        background: linear-gradient(#5a98fa, #3c81f0 20%, #3878e8);
        font: 9px/12px "Noto Sans", sans-serif;
        white-space: nowrap;
      }
      .task svg {
        flex-shrink: 0;
      }
      .lang {
        margin-left: auto;
        align-self: center;
        padding-right: 11px;
      }
      .tray {
        display: flex;
        align-items: center;
        gap: 1px;
        padding: 0 10px 0 6px;
        background: linear-gradient(#3bb5f7, #129bee 20%, #0f8eea 80%, #0c75c8);
        border-left: 1px solid #0d4f9e;
      }
      time {
        padding-left: 4px;
        font-size: 9px;
      }
    `,
  ];

  private icon(a: unknown, size = 14) {
    return html`<svg width=${size} height=${size} viewBox="0 0 14 14" fill="none">${a}</svg>`;
  }

  render() {
    return html`
      <button class="start">
        ${this.icon(svg`<path d="M2 2q2-2 4 0L5 6Q3 5 1 6z" fill="#f0703a"/><path d="M7 2.500q3 1 5-1L11 6q-2 1-5 0z" fill="#85cc4a"/><path d="M1 7q2-1 4 0l-1 4.500Q2 10 0 11.500z" fill="#5a9af5"/><path d="M6 7.500q2 1 5 0L10 12q-2 1-5 0z" fill="#f8d54a"/>`)}start
      </button>
      <a class="google" href="#">Google</a>
      <div class="quick">${quick.map(([n, a]) => html`<button aria-label=${n}>${this.icon(a)}</button>`)}</div>
      <span class="more">»</span>
      <button class="task">${this.icon(ie, 13)}Forum fotografia : ph...</button>
      <button class="task">
        ${this.icon(svg`<path d="M1 3l3 2h5l4-4v8q-3 4-8 3L1 9z" fill="#5d5349"/><circle cx="5" cy="5.500" r="2" fill="#fff"/><circle cx="9" cy="5.500" r="2" fill="#fff"/><path d="M5 5v1M9 5v1" stroke="#000" stroke-width="1.500"/><path d="M3 10h5" stroke="#cf9a60" stroke-width="1.500"/>`, 13)}GNU Image Manipulat...
      </button>
      <span class="lang">IT</span>
      <div class="tray">${tray.map((a) => this.icon(a, 13))}<time>${this.clock}</time></div>
    `;
  }
}

const menus: [string, string, string][] = [
  ["Imma", "", "gine"], ["", "L", "ivello"], ["", "C", "olori"], ["S", "t", "rumenti"],
  ["Filt", "r", "i"], ["", "F", "inestre"], ["", "A", "iuto"],
];

@customElement("app-root")
export class AppRoot extends LitElement {
  @property({ type: Number }) tipX = 252;
  @property({ type: Number }) tipY = 200;

  static styles = [
    controls,
    css`
      :host {
        display: flex;
        flex-direction: column;
        height: 100vh;
        overflow: hidden;
      }
      .desktop {
        position: relative;
        display: flex;
        flex: 1;
        min-height: 0;
      }
      .main {
        display: flex;
        flex: 1;
        flex-direction: column;
        background: #ece9d8;
      }
      .caption {
        display: flex;
        justify-content: flex-end;
        height: 20px;
        padding: 2px 1px;
        background: linear-gradient(#a4b8f0, #7a94e0 20%, #809fe8 70%, #8aabec);
      }
      .caption .close {
        width: 4px;
        height: 15px;
        background: #cc5568;
        border: 0;
      }
      .menu {
        display: flex;
        gap: 9px;
        height: 16px;
        align-items: center;
        padding-left: 161px;
        background: linear-gradient(#fbfbf8, #efede2);
        border-bottom: 1px solid #dcd4c4;
        font-size: 9px;
      }
      .canvas {
        position: relative;
        flex: 1;
        min-height: 0;
        border-bottom: 1px solid #aaa89a;
      }
      .canvas svg {
        width: 100%;
        height: 100%;
      }
      .status {
        height: 19px;
      }
      .tip {
        position: absolute;
        border: 1px solid #222;
        background: #ffffe1;
        box-shadow: 2px 2px 1px #77756a;
        white-space: nowrap;
        font-family: "Open Sans", sans-serif;
      }
      tool-window {
        position: absolute;
        left: 2px;
        top: 3px;
        bottom: 0;
        width: 182px;
      }
      dock-window {
        position: absolute;
        right: 5px;
        top: 0;
        bottom: 0;
        width: 185px;
      }
    `,
  ];

  render() {
    return html`
      <div class="desktop">
        <main class="main">
          <div class="caption"><button class="close" aria-label="Chiudi"></button></div>
          <nav class="menu">${menus.map(([a, b, c]) => html`<button>${a}<u>${b}</u>${c}</button>`)}</nav>
          <div class="canvas">
            <svg viewBox="0 36 800 521" preserveAspectRatio="xMinYMax meet" fill="#c9c6b7">
              <path d="M552 235C531 310 420 418 274 445 305 467 322 510 308 557H542C565 440 564 330 552 235z" />
              <circle cx="235" cy="540" r="49" />
            </svg>
            <div class="tip" style=${styleMap({ left: `${this.tipX}px`, top: `${this.tipY}px` })}>Trascina e rilascia qui i file immagine per aprirli</div>
          </div>
          <div class="status"></div>
        </main>
        <tool-window></tool-window>
        <dock-window></dock-window>
      </div>
      <task-bar></task-bar>
    `;
  }
}
